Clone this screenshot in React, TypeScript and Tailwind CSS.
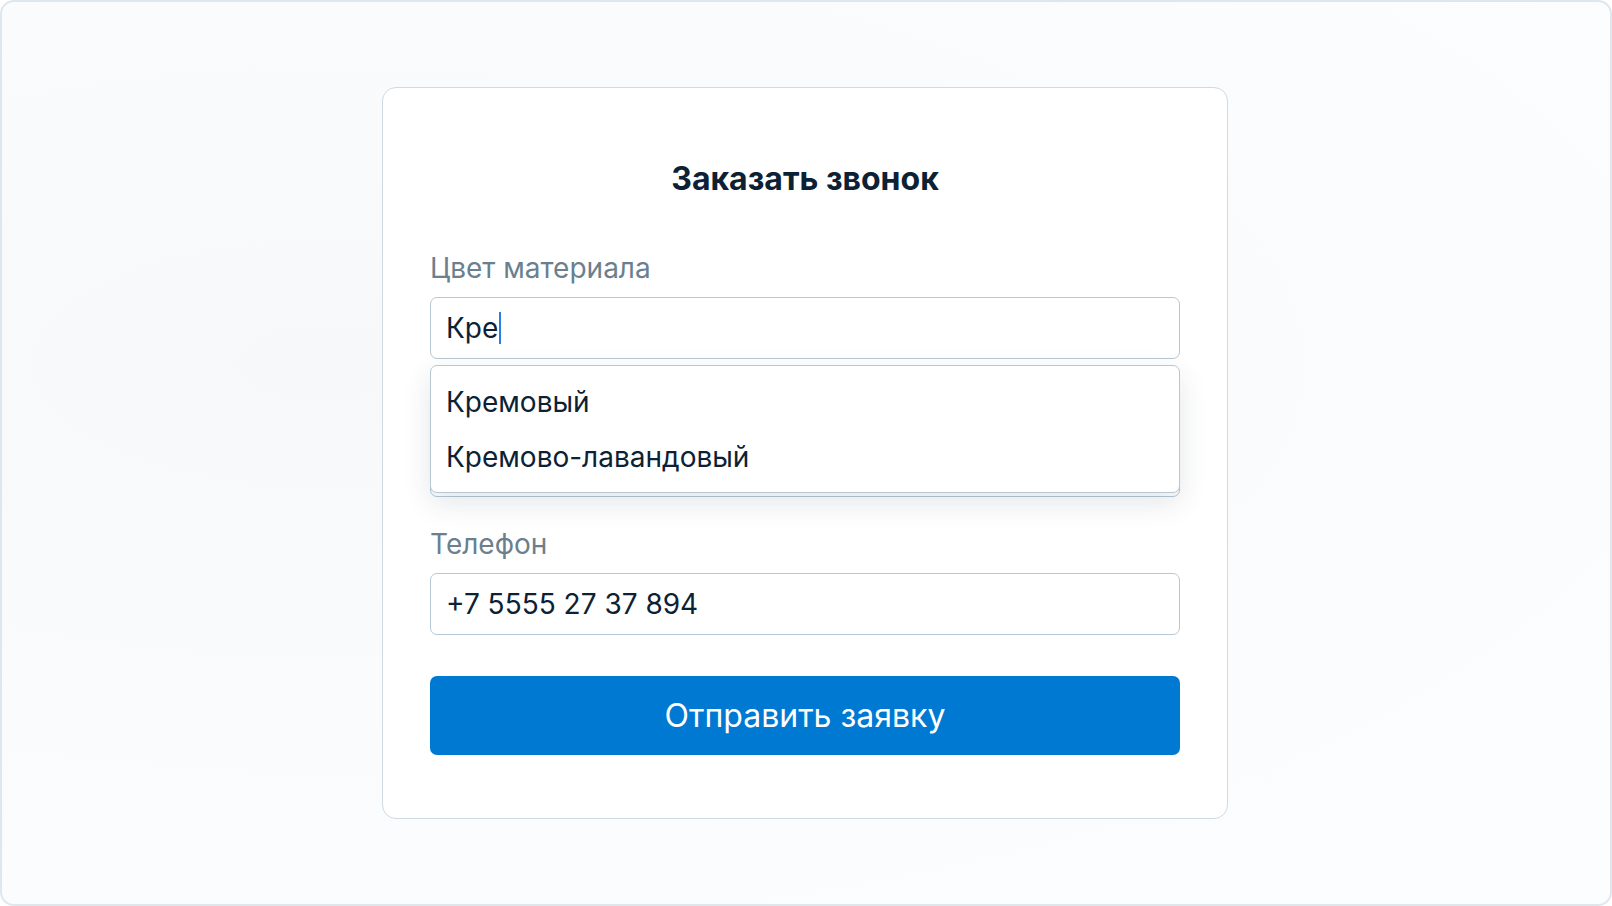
import { useState } from "react";

const suggestions = ["Кремовый", "Кремово-лавандовый"];

function Label({ children, hidden }: { children: React.ReactNode; hidden?: boolean }) {
  return (
    <div className={hidden ? "invisible text-[28px] leading-[32px] text-[#6b7f8e]" : "text-[28px] leading-[32px] text-[#6b7f8e]"}>
      {children}
    </div>
  );
}

export default function App() {
  const [color] = useState("Кре");
  const [phone] = useState("+7 5555 27 37 894");

  return (
    <div className="h-[906px] w-[1612px] bg-white" style={{ fontFamily: "Inter, 'Noto Sans', sans-serif" }}>
      <div className="flex h-full w-full justify-center rounded-[14px] border-2 border-[#dfe7ee] bg-[radial-gradient(ellipse_at_20%_40%,#f6f8fa_0%,#fafbfc_45%,#fcfdfe_100%)] pr-[2px] pt-[85px]">
        <div className="h-[732px] w-[846px] rounded-[14px] border border-[#cfdae3] bg-white px-[47px] pt-[73px]">
          <h1 className="text-center text-[32px] font-bold leading-[36px] text-[#0c2234]">Заказать звонок</h1>

          <div className="relative mt-[55px]">
            <Label>Цвет материала</Label>
            <div className="mt-[13px] flex h-[62px] items-center rounded-[7px] border-[1.5px] border-[#b7c7d3] px-[15px] text-[28px] text-[#0c2234]">
              <span>{color}</span>
              <span className="ml-[1px] h-[32px] w-[2px] bg-[#2a7fe0]" />
            </div>

            {/* autocomplete list, lies over the next field */}
            <div className="absolute left-0 right-0 top-[113px] z-10 rounded-[7px] border-[1.5px] border-[#b7c7d3] bg-white py-[8px] shadow-[0_10px_28px_rgba(30,50,70,0.12)]">
              {suggestions.map((s) => (
                <div key={s} className="flex h-[55px] items-center px-[15px] text-[28px] text-[#0c2234]">
                  {s}
                </div>
              ))}
            </div>
          </div>

          <div className="mt-[31px]">
            <Label hidden>Имя</Label>
            <div className="mt-[13px] h-[62px] rounded-[7px] border-[1.5px] border-[#b7c7d3]" />
          </div>

          <div className="mt-[31px]">
            <Label>Телефон</Label>
            <div className="mt-[13px] flex h-[62px] items-center rounded-[7px] border-[1.5px] border-[#b7c7d3] px-[15px] text-[28px] text-[#0c2234]">
              {phone}
            </div>
          </div>

          <button className="mt-[41px] flex h-[79px] w-full items-center justify-center rounded-[7px] bg-[#0079d3] text-[32px] text-white">
            Отправить заявку
          </button>
        </div>
      </div>
    </div>
  );
}
